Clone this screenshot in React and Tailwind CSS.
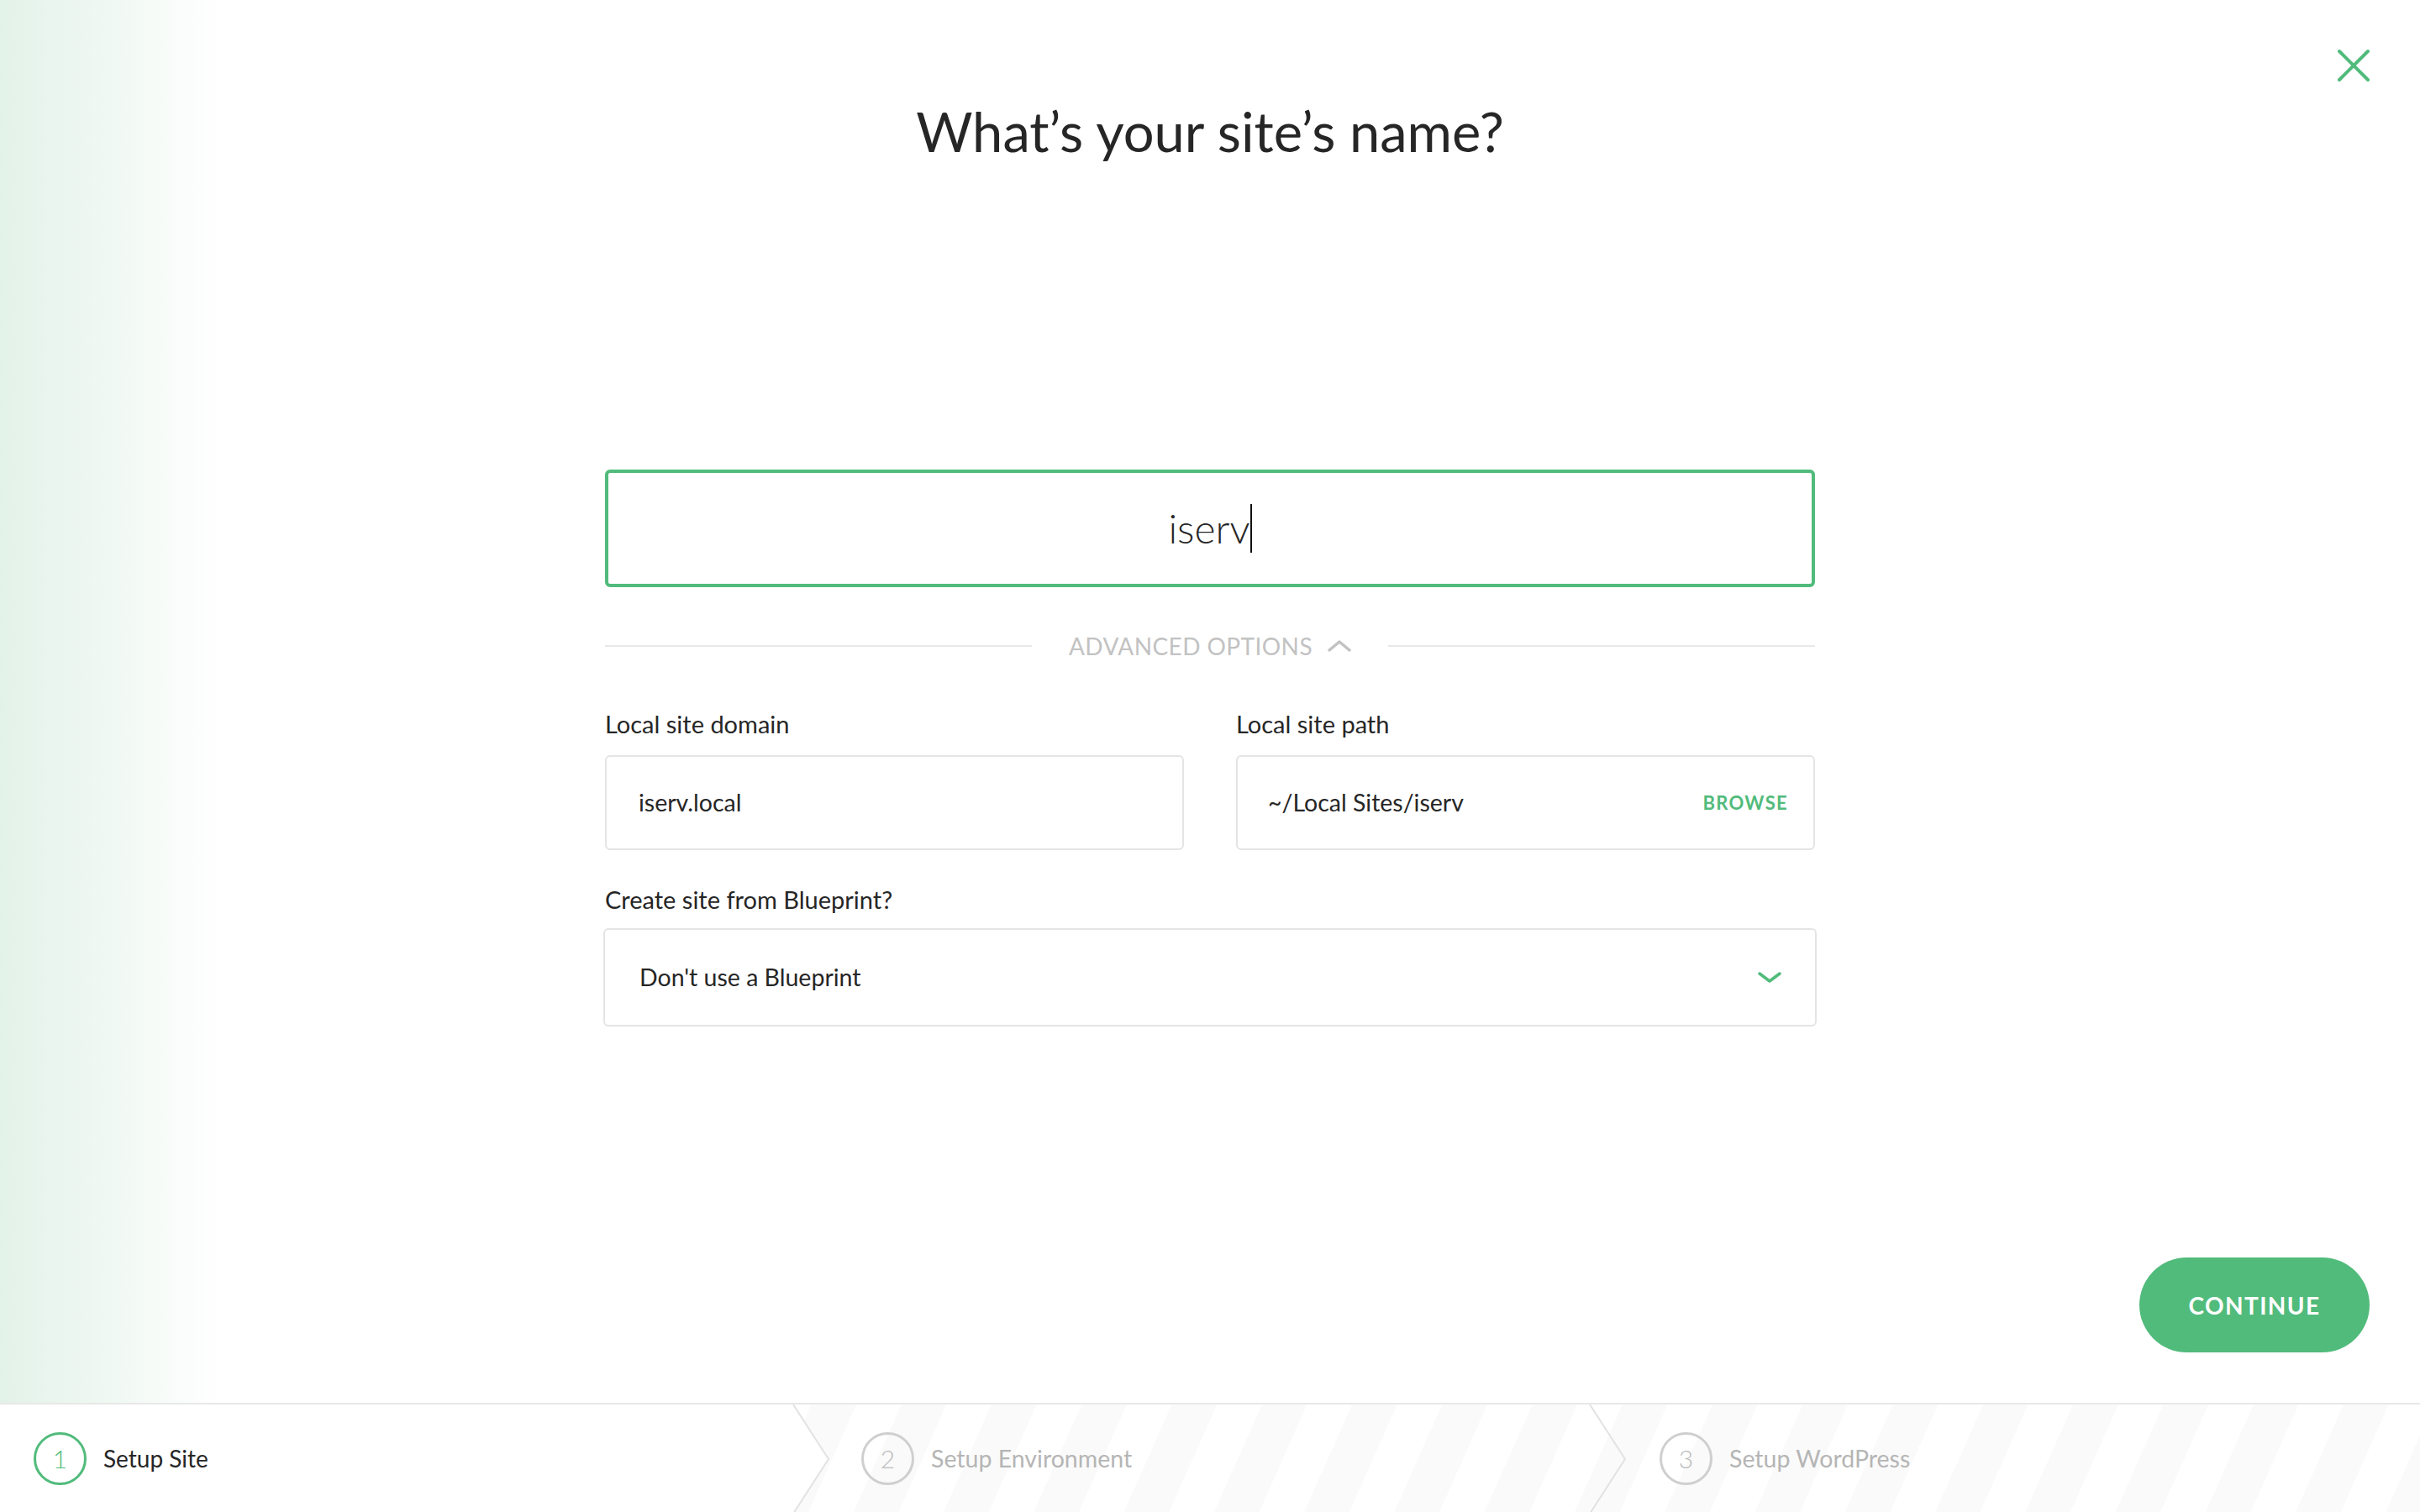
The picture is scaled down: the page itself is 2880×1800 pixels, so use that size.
import React from "react";

const Step = ({ num, label, active }) => (
  <div className="flex items-center gap-[20px]">
    <div
      className={
        active
          ? "w-[63px] h-[63px] rounded-full border-[3px] border-[#51bb7b] text-[#51bb7b] flex items-center justify-center text-[30px] font-light"
          : "w-[63px] h-[63px] rounded-full border-[3px] border-[#cfcfcf] text-[#bbbbbb] flex items-center justify-center text-[30px] font-light"
      }
    >
      {num}
    </div>
    <span className={active ? "text-[28px] text-[#262626]" : "text-[28.5px] text-[#b5b5b5]"}>{label}</span>
  </div>
);

const Chevron = ({ className }) => (
  <svg className={className} width="44" height="130" viewBox="0 0 44 130" fill="none">
    <polyline points="1,0 43,65 1,130" stroke="#e2e2e2" strokeWidth="2" />
  </svg>
);

export default function App() {
  return (
    <div className="w-full h-[1800px] flex flex-col bg-white font-['Lato',sans-serif] overflow-hidden">
      {/* main dialog area */}
      <div className="flex-1 relative flex flex-col bg-[linear-gradient(90deg,#e3f2e9_0px,#f0f8f3_130px,#ffffff_262px)]">
        <button className="absolute top-[58px] right-[58px] w-[42px] h-[40px] flex items-center justify-center">
          <svg width="42" height="40" viewBox="0 0 42 40" fill="none">
            <path d="M4 3L38 37M38 3L4 37" stroke="#51bb7b" strokeWidth="4" strokeLinecap="round" />
          </svg>
        </button>

        <h1 className="pt-[124px] text-center text-[65px] leading-none text-[#262626] font-normal">
          What’s your site’s name?
        </h1>

        <div className="w-[1440px] mx-auto mt-[370px]">
          <div className="h-[140px] border-4 border-[#51bb7b] rounded-[6px] flex items-center justify-center">
            <span className="text-[48px] font-light text-[#262626] leading-none">iserv</span>
            <span className="w-[2px] h-[58px] bg-[#111]" />
          </div>

          <div className="mt-[50px] h-[40px] flex items-center">
            <div className="flex-1 h-[2px] bg-[#e8e8e8]" />
            <div className="px-[44px] flex items-center gap-[18px]">
              <span className="text-[28px] leading-none tracking-[0.015em] text-[#c2c2c2] uppercase">Advanced Options</span>
              <svg width="28" height="14" viewBox="0 0 28 14" fill="none">
                <path d="M2 12L14 2L26 12" stroke="#c2c2c2" strokeWidth="3.5" strokeLinecap="round" strokeLinejoin="round" />
              </svg>
            </div>
            <div className="flex-1 h-[2px] bg-[#e8e8e8]" />
          </div>

          <div className="mt-[58px] grid grid-cols-2 gap-x-[62px]">
            <div>
              <label className="block text-[29px] leading-none text-[#262626]">Local site domain</label>
              <div className="mt-[23px] h-[113px] border-2 border-[#e4e4e4] rounded-[6px] pl-[38px] flex items-center text-[28.5px] text-[#262626]">
                iserv.local
              </div>
            </div>
            <div>
              <label className="block text-[29px] leading-none text-[#262626]">Local site path</label>
              <div className="mt-[23px] h-[113px] border-2 border-[#e4e4e4] rounded-[6px] pl-[36px] pr-[30px] flex items-center justify-between text-[28.5px] text-[#262626]">
                <span>~/Local Sites/iserv</span>
                <span className="text-[22px] font-bold tracking-[0.06em] text-[#51bb7b]">BROWSE</span>
              </div>
            </div>
          </div>

          <label className="block mt-[44px] text-[29px] leading-none text-[#262626]">Create site from Blueprint?</label>
          <div className="mt-[20px] -mx-[2px] h-[117px] border-2 border-[#e4e4e4] rounded-[6px] pl-[41px] pr-[40px] flex items-center justify-between text-[28.5px] text-[#262626]">
            <span>Don't use a Blueprint</span>
            <svg width="28" height="13" viewBox="0 0 28 13" fill="none">
              <path d="M2 2L14 11L26 2" stroke="#51bb7b" strokeWidth="3.5" strokeLinecap="round" strokeLinejoin="round" />
            </svg>
          </div>
        </div>

        <button className="mt-auto mb-[60px] mr-[60px] self-end w-[274px] h-[113px] rounded-full bg-[#51bb7b] text-white text-[28px] font-bold tracking-[0.05em]">
          CONTINUE
        </button>
      </div>

      {/* steps footer */}
      <div className="h-[130px] border-t-2 border-[#e8e8e8] flex bg-[repeating-linear-gradient(114deg,#fafafa_0px,#fafafa_49px,#ffffff_49px,#ffffff_98px)]">
        <div className="relative w-[986px] -mr-[42px] h-full bg-white [clip-path:polygon(0_0,944px_0,986px_50%,944px_100%,0_100%)] pl-[40px] flex items-center">
          <Step num="1" label="Setup Site" active />
        </div>
        <div className="relative w-[948px] h-full pl-[81px] flex items-center">
          <Chevron className="absolute -left-[1px] top-0" />
          <Step num="2" label="Setup Environment" />
          <Chevron className="absolute left-[947px] top-0" />
        </div>
        <div className="relative flex-1 h-full pl-[83px] flex items-center">
          <Step num="3" label="Setup WordPress" />
        </div>
      </div>
    </div>
  );
}
